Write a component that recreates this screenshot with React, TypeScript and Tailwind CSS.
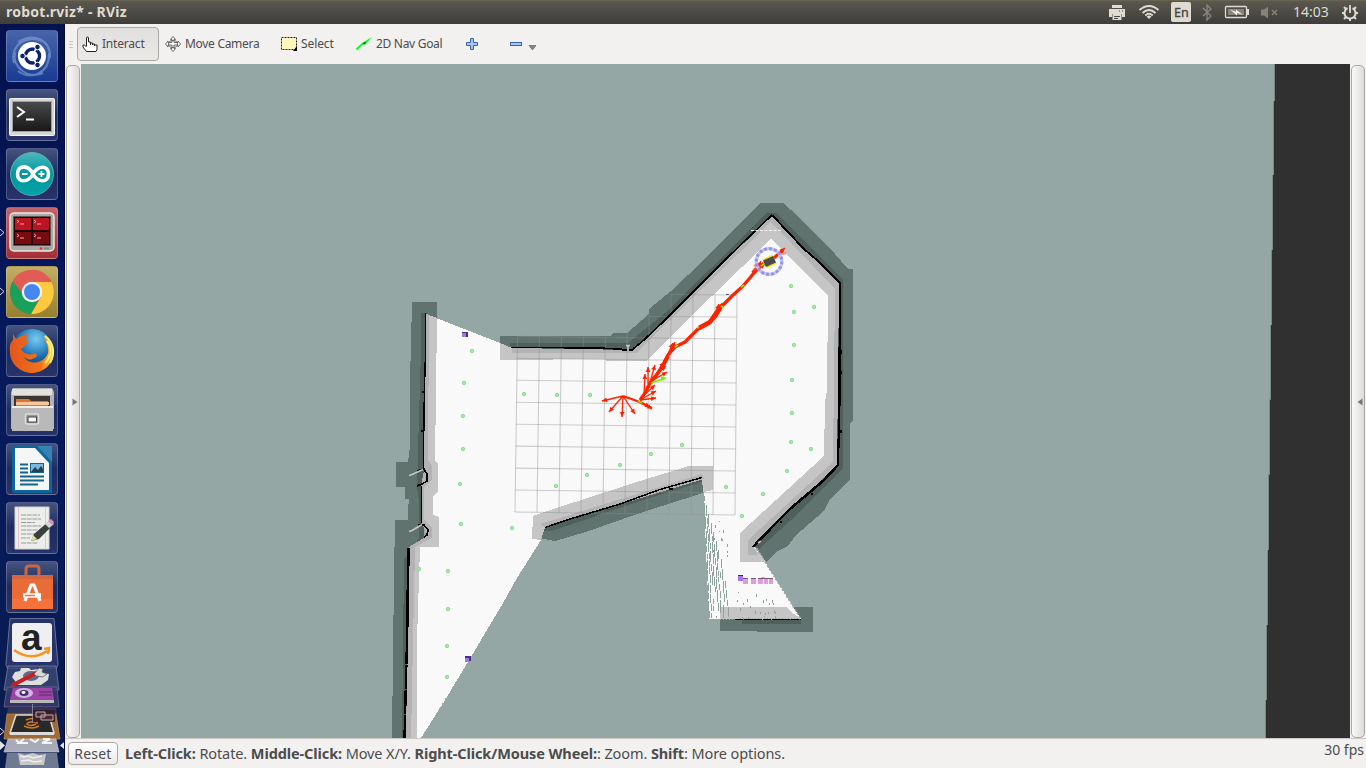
import React from "react";

const FONT = "font-['Noto_Sans','Open_Sans',sans-serif]";

type Pt = [number, number];

const DOTS: Pt[] = [
  [472, 351], [464, 383], [463, 416], [463, 449], [460, 484], [461, 524], [512, 528], [524, 394], [557, 395], [590, 395],
  [556, 486], [587, 475], [620, 465], [651, 454], [682, 445], [726, 487], [791, 286], [794, 312], [814, 307], [794, 345],
  [792, 380], [792, 413], [791, 442], [811, 449], [787, 471], [763, 494], [742, 516], [419, 569], [448, 571], [448, 609],
  [447, 646], [447, 677],
];

const ARROWS: [Pt, Pt][] = [
  [[623, 396], [602, 401]], [[623, 396], [609, 412]], [[623, 396], [622, 417]], [[623, 396], [635, 414]],
  [[648, 384], [648, 367]], [[650, 382], [655, 365]], [[650, 382], [667, 372]], [[652, 378], [666, 366]],
  [[640, 399], [655, 385]], [[640, 400], [656, 391]], [[640, 400], [656, 398]], [[644, 395], [645, 374]],
  [[655, 375], [664, 362]], [[640, 401], [652, 409]], [[640, 402], [650, 407]], [[668, 356], [675, 342]],
  [[666, 358], [673, 343]], [[716, 316], [722, 303]], [[716, 313], [719, 304]], [[769, 262], [785, 248]],
  [[757, 270], [761, 261]], [[754, 272], [765, 264]], [[646, 388], [654, 379]],
];

function arrowPath([a, b]: [Pt, Pt]) {
  const dx = b[0] - a[0];
  const dy = b[1] - a[1];
  const l = Math.hypot(dx, dy);
  const u = dx / l;
  const v = dy / l;
  const bx = b[0] - u * 5;
  const by = b[1] - v * 5;
  return `M${b[0]} ${b[1]}L${bx - v * 2.4} ${by + u * 2.4}L${bx + v * 2.4} ${by - u * 2.4}Z`;
}

/* Gaps between laser rays below the doorway */
const RAYS: [number, number, number][] = [];
{
  let s = 17;
  const rnd = () => {
    s = (s * 16807) % 2147483647;
    return s / 2147483647;
  };
  for (let i = 0; i < 9; i++) {
    for (let y = 496 + i * 9; y < 618; ) {
      const len = 5 + Math.floor(rnd() * 9);
      const x = 704.5 + i * 1.6 + ((y - 492) / 126) * (5 + i * 0.9);
      if (rnd() > i * 0.03) RAYS.push([x, y, Math.min(len, 618 - y)]);
      y += len + 1 + Math.floor(rnd() * 2);
    }
  }
  for (let i = 0; i < 12; i++) {
    RAYS.push([712 + rnd() * 16, 520 + rnd() * 50, 1 + rnd() * 2]);
  }
  for (let i = 0; i < 24; i++) {
    RAYS.push([728 + rnd() * 48, 592 + rnd() * 25, 1 + rnd() * 2]);
  }
}

function MapView() {
  return (
    <svg className="block h-full w-full" viewBox="81 64 1269 674" preserveAspectRatio="none">
      <g shapeRendering="crispEdges">
        <rect x="81" y="64" width="1269" height="674" fill="#94a7a4" />
        <path d="M1275 64H1350V738H1266Z" fill="#303030" />
        <path d="M1274 64H1275L1266 738H1265Z" fill="#7b8a87" />
        {/* inflated obstacle halo */}
        <g fill="#60736f">
          <path d="M412 302H437V318L426 345L424 540L420 548V738H392L394 575L395 520H408V510L409 499H405V487H396V462H408L410 446V380L411 342Z" />
          <path d="M500 336H610L613 333H627L649 314V309L671 291L705 259L728 235L760 203H783L798 216L812 231L835 254L848 269H853V420L850 423V479L830 499L824 511L795 536L788 546L778 551L766 562L756 546L770 520L828 300L771 239L640 360H500Z" />
          <path d="M545 527L702 477L703 493L684 499L640 513L586 532L555 541L539 538Z" />
          <path d="M720 607H813V632H757V631H720Z" />
        </g>
        <g fill="#4f605c">
          <path d="M421 313H427L424 540L412 548L408 738H402L404 560L419 538V500L417 488L418 450L421 350Z" />
          <path d="M510 343H628L665 313L710 269L767 213H776L843 280L843 468L800 512L759 549L753 546L836 465L839 283L772 216L633 350L511 348Z" />
          <path d="M545 527L702 477L702 482L640 501L552 531L543 531Z" />
          <path d="M742 619H801V624H742Z" />
        </g>
        {/* free space */}
        <path d="M426 314L500 343L512 348L633 350L772 216L839 283L837 465L754 546L765 562L801 619H709L706 550L703 478L545 527L541 540L517 578L502 605L488 628L474 652L447 697L421 738H407L409 547L427 536L421 520V487L424 470Z" fill="#f9f9f9" />
        <path d="M422 738L447 697L465 668" stroke="#94a7a4" strokeWidth="1" strokeDasharray="1 2 2 1" fill="none" />
        <g fill="#c5c5c5">
          <path d="M426 314L437 318L435 461L438 464V492L433 496V515L439 517V547H420L417 640V738H406L409 547L427 536L421 520V487L424 470Z" />
          <path d="M500 343L512 348L633 350L772 216L839 283L837 465L753 546L766 562H740V533L824 456L825 402L827 390L828 295L771 239L712 296L646 361H606V359L500 360Z" />
          <path d="M533 516L541 513L640 481L689 466H713V490L703 492L702 477L545 527L541 540L532 539Z" />
          <path d="M720 607H786L790 611L801 619H720Z" />
        </g>
        <g fill="#b3b3b3">
          <path d="M426 314L429 315L428 460L432 466V480L424 487V520L432 528V538L415 547L411 738H406L409 547L427 536L421 520V487L424 470Z" />
          <path d="M512 348L633 350L772 216L839 283L837 465L753 546L758 555H748V540L833 462L835 289L771 222L636 353H512Z" />
          <path d="M540 524L702 474L704 479L545 527Z" />
        </g>
      </g>

      <path
        d={RAYS.map(([x, y, l]) => `M${x.toFixed(1)} ${y.toFixed(1)}v${l.toFixed(1)}`).join("")}
        stroke="#8ea29e"
        strokeWidth="1"
        shapeRendering="crispEdges"
      />
      <path d="M711 619h90M740 618h60" stroke="#94a7a4" strokeDasharray="1 2" shapeRendering="crispEdges" />
      <path d="M765 562L801 619" stroke="#94a7a4" strokeWidth="1.5" strokeDasharray="2 2" />

      {/* grid */}
      <g stroke="#8f8f8f" strokeOpacity="0.42" strokeWidth="1.1">
        {Array.from({ length: 11 }, (_, i) => (
          <g key={i}>
            <path d={`M${517.5 + i * 21.95} ${i > 6 ? 294 : 337 - (i > 4 ? (i - 4) * 12 : 0)}L${515 + i * 22} ${512 + i * 0.3}`} />
            <path d={`M${i < 2 ? 671 - i * 22 : 517.3 - i * 0.22} ${(i < 2 ? 294.5 : 292.5) + i * 21.95}L${737 - i * 0.2} ${295 + i * 22}`} />
          </g>
        ))}
      </g>

      {/* walls */}
      <g fill="none" stroke="#000" strokeWidth="1.7" shapeRendering="crispEdges">
        <path d="M425.5 313V350L424 410L423.500 469" strokeWidth="1.4" />
        <path d="M417 471L424 469L427 474L427 481L422 484L417 486" />
        <path d="M421.500 486V523" strokeWidth="1.400" />
        <path d="M418 525L424 525L428 530L427 535L424 537" />
        <path d="M408.500 548L407 640" strokeWidth="2.600" />
        <path d="M407 640L404.500 738" strokeWidth="2.400" strokeDasharray="24 1" />
        <path d="M511 347.500H555L613 348.500M633 349L644 340L664 321L701 284L728 257L772 215" />
        <path d="M613 348.500L627 350L633 350" strokeWidth="2" />
        <path d="M772 215L788 232L804 249L818 261L839 282L840 283" strokeWidth="2" />
        <path d="M840 282V337L839.500 350V402L838 465" strokeWidth="2.200" />
        <path d="M838 465L824 480L810 492L790 509L774 525L753 547" strokeWidth="2.600" />
        <path d="M545 527.500L570 519L620 504L660 489.500L702 477.500" strokeWidth="1.500" />
        <path d="M735 619.500H801" strokeWidth="1.800" strokeDasharray="8 1 18 1" />
        <path d="M422 391.500h2M421 431h2M669 488.500h4" strokeWidth="2" />
        <path d="M841 350v4M841 371v3M841 430v3M812 493v2M781 521v2" strokeWidth="2" />
      </g>
      <path d="M409 475.500l3-1 11-5M409 531.500l3-1 10-6M626 345.500h4M628 345v6M758 543l3-2" stroke="#c5c5c5" strokeWidth="1.700" fill="none" />
      <path d="M751 230.500h31" stroke="#f5f5f5" strokeDasharray="3 1.500" />
      <path d="M726 294.500h3" stroke="#555" />

      {DOTS.map(([x, y]) => (
        <circle key={`${x}-${y}`} cx={x} cy={y} r="1.700" fill="#a0eda2" stroke="#8bdc94" strokeWidth="1" />
      ))}

      {/* markers */}
      <g shapeRendering="crispEdges">
        <path d="M462 332h6v5h-6zM465 656h6v5h-6z" fill="#48307c" />
        <path d="M462 333h4v4h-4zM465 658h4v4h-4zM738 576h5v5h-5z" fill="#a176e8" />
        <path d="M738 575h5v1h-5z" fill="#3d2870" />
        <path d="M743 579h5v5h-5zM751 579h5v5h-5zM758 579h5v5h-5zM764 579h4v5h-4zM769 579h4v5h-4z" fill="#df9de0" />
        <path d="M743 578h5v1h-5zM751 578h5v1h-5zM758 578h15v1h-15z" fill="#7c557d" />
        <path d="M761 577h4v1h-4z" fill="#8bdc94" />
      </g>

      {/* pose history */}
      <g fill="none" stroke="#ff2200" strokeLinejoin="round">
        <path d="M764 263L757 269L749 279L742 287L733 295L722 306L716 316L709 323L698 329L685 342L675 347L668 355L663 366L656 376L650 383L645 393L640 400" strokeWidth="3.200" />
        <path d="M721 306L710 322L699 328M762 264L753 273" strokeWidth="4.500" />
        <path d="M668 356L661 369" strokeWidth="4" />
        <path d="M774 258L783 250" strokeWidth="3.200" />
        <path d="M623 396L637 401L652 408" strokeWidth="2.200" />
        <path d={ARROWS.map(([a, b]) => `M${a[0]} ${a[1]}L${b[0]} ${b[1]}`).join("")} strokeWidth="1.300" />
      </g>
      <path d={ARROWS.map(arrowPath).join("")} fill="#ff2200" />
      <path d="M753 270l8-4M754 265l8 7M779 255l7-2" stroke="#ff5544" strokeWidth="2" strokeOpacity="0.600" />
      <path d="M651 383L663 379M638 401l4 2M675 347l3-2M721 306l3 2M741 287l3-2M697 328l2-1M761 266l4-3" stroke="#79f000" strokeWidth="1.800" />
      <path d="M667 378l-6-2v5z" fill="#6cf500" />

      {/* robot */}
      <circle cx="769" cy="261.500" r="12.800" fill="none" stroke="#c4c4f6" strokeWidth="3.200" />
      <circle cx="769" cy="261.500" r="12.800" fill="none" stroke="#9292e8" strokeWidth="3" strokeDasharray="2.800 2.200" />
      <g transform="rotate(-24 769.500 261.500)">
        <rect x="764" y="256.500" width="11" height="10" fill="#f2ea17" />
        <rect x="764" y="258" width="11" height="7" fill="#4a4b4b" />
      </g>
    </svg>
  );
}

/* ---------- launcher ---------- */

function Tile({ tone, children, running }: { tone: string; children: React.ReactNode; running?: boolean }) {
  return (
    <div className="relative h-[52px] w-[52px] shrink-0">
      {running && (
        <svg className="absolute top-[21px] -left-[6px] h-[9px] w-[5px]" viewBox="0 0 5 9">
          <path d="M0 1l4 3.500-4 3.500" fill="none" stroke="#d8d8e0" />
        </svg>
      )}
      <div className={`h-full w-full overflow-hidden rounded-[4px] border border-white/20 ${tone}`}>
        <svg className="block h-[50px] w-[50px]" viewBox="1 1 50 50">
          {children}
        </svg>
      </div>
    </div>
  );
}

const NAVY = "bg-linear-to-b from-[#46537f] via-[#1d2b5f] to-[#27336a]";

function Launcher() {
  return (
    <nav className="flex w-[65px] shrink-0 flex-col items-start gap-[7px] overflow-hidden border-r border-[#020a38] bg-linear-to-b from-[#04124d] via-[#061a5e] to-[#0a1c4d] pt-[6px] pl-[6px]">
      <Tile tone="bg-linear-to-b from-[#4864ab] to-[#183c94]">
        <g fill="none" stroke="#8ba3d6" strokeWidth="2" strokeOpacity="0.600">
          <path d="M44 28C45 10 28 2 12 12M8 33C3 15 22 3 38 12M12 41C25 51 44 43 43 23M9 22C6 38 22 49 37 43" />
        </g>
        <circle cx="26" cy="26" r="14" fill="#fff" />
        <circle cx="26.500" cy="26" r="7" fill="none" stroke="#0c246d" strokeWidth="3.400" />
        <path d="M26 26L16 26M26 26L31 17M26 26L31 35" stroke="#fff" strokeWidth="1.600" />
        <circle cx="26.500" cy="26" r="5" fill="#fff" />
        <g fill="#0c246d" stroke="#fff" strokeWidth="1">
          <circle cx="16.500" cy="26" r="2.800" />
          <circle cx="31.500" cy="17" r="2.800" />
          <circle cx="31.500" cy="35" r="2.800" />
        </g>
      </Tile>

      <Tile tone={NAVY}>
        <defs>
          <linearGradient id="term" x1="0" y1="0" x2="0" y2="1">
            <stop offset="0" stopColor="#4a4a4a" />
            <stop offset="1" stopColor="#171717" />
          </linearGradient>
        </defs>
        <rect x="3.500" y="9.500" width="45" height="37" rx="1" fill="#d6d6d6" stroke="#f7f7f7" />
        <rect x="6.500" y="12.500" width="39" height="30" fill="url(#term)" stroke="#a0a0a0" />
        <path d="M11 18l7 5-7 5M20 30.500h8" fill="none" stroke="#fff" strokeWidth="2" />
      </Tile>

      <Tile tone={NAVY}>
        <defs>
          <linearGradient id="ard" x1="0" y1="0" x2="0" y2="1">
            <stop offset="0" stopColor="#4bb9bb" />
            <stop offset="0.500" stopColor="#00979c" />
            <stop offset="1" stopColor="#00a3a8" />
          </linearGradient>
        </defs>
        <circle cx="26" cy="26" r="21.500" fill="url(#ard)" stroke="#68b9c0" strokeWidth="0.800" />
        <path d="M27 26C22 16 11.500 17 11.500 26S22 35 27 26C32 17 42.500 17 42.500 26S32 35 27 26Z" fill="none" stroke="#fff" strokeWidth="3.600" />
        <path d="M16 26h5.500M32.500 26h6M35.500 23v6" stroke="#fff" strokeWidth="1.800" />
      </Tile>

      <Tile tone="bg-linear-to-b from-[#c26469] to-[#a52e36]" running>
        <rect x="4" y="6" width="44" height="38" rx="4" fill="#aaa9a4" stroke="#e8e6e0" strokeWidth="1.500" />
        <rect x="7.500" y="9.500" width="37" height="29" fill="#220506" stroke="#585858" />
        <path d="M9 11h16v12H9zM27 11h16v12H27z" fill="#bc1522" />
        <path d="M9 25h16v12H9zM27 25h16v12H27z" fill="#760b10" />
        <g fill="none" stroke="#ff9fa0" strokeWidth="1">
          <path d="M11 13l2 1.500-2 1.500M14 17h4M28 13l2 1.500-2 1.500M31 17h4M11 27l2 1.500-2 1.500M14 31h4M28 27l2 1.500-2 1.500M31 31h4" />
        </g>
        <circle cx="35" cy="41.500" r="1.300" fill="#f22" />
        <path d="M38 41.500h5" stroke="#888" strokeWidth="2" />
      </Tile>

      <Tile tone="bg-linear-to-b from-[#c2ad65] to-[#95802e]" running>
        <circle cx="26" cy="26" r="22" fill="#e0453d" />
        <path d="M26 26L6.500 16A22 22 0 0 0 25 48L34 31Z" fill="#19a05b" />
        <path d="M26 16H45.500A22 22 0 0 1 25 48L35 31Z" fill="#fdc93e" />
        <path d="M27 16H45.500C41 7 32 3 26 4 16 4 10 9 7 15L17 29Z" fill="#e15c54" />
        <circle cx="26" cy="26" r="10.200" fill="#f5f5f5" />
        <circle cx="26" cy="26" r="8" fill="#4587f0" />
      </Tile>

      <Tile tone={NAVY}>
        <defs>
          <radialGradient id="globe" cx="0.600" cy="0.250" r="0.800">
            <stop offset="0" stopColor="#78ccf2" />
            <stop offset="0.600" stopColor="#1569ad" />
            <stop offset="1" stopColor="#08265e" />
          </radialGradient>
          <linearGradient id="fox" x1="0" y1="0" x2="1" y2="0">
            <stop offset="0" stopColor="#e2571c" />
            <stop offset="0.700" stopColor="#ef721b" />
            <stop offset="1" stopColor="#ffd43b" />
          </linearGradient>
        </defs>
        <circle cx="26" cy="24" r="20" fill="url(#globe)" />
        <path d="M7 9L10 14C14 11 18 10 22 9L20 14 22 17 19 21 15 24C18 29 23 31 30 28L31 31C26 36 21 35 17 31 23 41 38 39 42 28 43 22 40 15 37 11 43 14 47 21 48 27 47 41 36 48 25 48 13 47 4 38 4 27 3 21 5 17 7 15Z" fill="url(#fox)" />
        <path d="M39 11C47 17 50 27 44 38M41 16C46 22 46 31 39 38" fill="none" stroke="#fff176" strokeWidth="2" />
      </Tile>

      <Tile tone={NAVY}>
        <path d="M5 8l2-4h39l2 4v37H5z" fill="#b3b4b3" />
        <path d="M6 5h40v6H6z" fill="#e1e1e0" />
        <path d="M8 12h36v12H8z" fill="#3c3630" />
        <path d="M10 15h13l2 2h17v5H10z" fill="#d8763a" />
        <path d="M10 18h33v3H10z" fill="#f8c694" />
        <path d="M6 22h41v25H6z" fill="#b8b9b8" />
        <path d="M6 22h41v2H6z" fill="#ededec" />
        <rect x="19.500" y="30" width="13" height="10" rx="2" fill="#999" stroke="#dedede" strokeWidth="1.500" />
        <rect x="22" y="33" width="8.500" height="5" fill="#f8f8f8" stroke="#444" />
      </Tile>

      <Tile tone={NAVY}>
        <path d="M9 3h23l14 15v32H9q-3 0-3-3V6q0-3 3-3z" fill="#0b66a0" />
        <path d="M9 5h20l14 15v27H9z" fill="#f5f6f6" />
        <path d="M31 3h15v16z" fill="#3583b5" />
        <path d="M14 21.500h8M14 25.500h8M14 29.500h8M14 33.500h24M14 37.500h24M14 41.500h18" stroke="#14658d" strokeWidth="1.800" />
        <path d="M24 20h14v10H24z" fill="#14658d" />
        <path d="M25 21h12v8H25z" fill="#79b7dc" />
        <path d="M25 29l4-5 3 3 3-4 2 3v3z" fill="#263f4c" />
      </Tile>

      <Tile tone={NAVY}>
        <path d="M9 5h34v42H9z" fill="#eceeec" stroke="#d3d4d4" />
        <path d="M12.500 5v41M39.500 5v41" stroke="#efb0b0" strokeWidth="0.700" />
        <path d="M15 13h19M15 17h20M15 20.500h14M15 24h20M15 28h17M15 32h15M15 36h9M15 41h17" stroke="#989b9b" strokeDasharray="5 0.700" />
        <path d="M25 39l3-7 14-12 4 4-13 13z" fill="#39403d" />
        <path d="M25 39l2-6 4 4z" fill="#e9df87" />
        <path d="M39 22l5-4 4 4-5 4z" fill="#d5d5d5" />
        <path d="M42 19l3-2 3 3-2 3z" fill="#e38bbd" />
      </Tile>

      <Tile tone={NAVY}>
        <path d="M20 15V8q0-3 3-3h7q3 0 3 3v7" fill="none" stroke="#cc6542" strokeWidth="3" />
        <path d="M6 14h41v34H6z" fill="#e96b35" />
        <path d="M6 14h41v4H6z" fill="#d36641" />
        <path d="M6 38h41v10H6z" fill="#f5733b" />
        <path d="M24 24h5M25 24l-6 16M28 24l6 16" stroke="#fff" strokeWidth="3.200" />
        <path d="M17 34.500h18" stroke="#fff" strokeWidth="4.500" />
        <path d="M19 34.500h10" stroke="#ee7547" strokeWidth="1.600" />
      </Tile>

      <div className="-mt-[2px] h-[150px] w-[59px]">
        <svg className="block h-[150px] w-[65px] -translate-x-[6px]" viewBox="0 618 65 150">
          <path d="M10 618.500h44l4 46q0 4-4 4H10q-4 0-4-4z" fill="#27336a" stroke="#68719b" />
          <rect x="12" y="623" width="40" height="39" rx="3" fill="#efefef" />
          <text x="21" y="649.500" className="font-['Liberation_Sans',sans-serif] text-[37px] font-bold" fill="#222">a</text>
          <path d="M14 650Q31 662 47 651M44 649l5-1-1 6" fill="none" stroke="#f7941e" strokeWidth="2.500" />
          {/* stacked tiles */}
          <path d="M8 666h48l3 24H4z" fill="#3a4675" fillOpacity="0.850" stroke="#8189aa" strokeWidth="0.700" />
          <path d="M12 677l3-5 5-1 1-3h8l2 2 8-1 2 4 8 1-1 6-7 5H18z" fill="#dedede" />
          <ellipse cx="31" cy="676" rx="8" ry="5" fill="#606b8c" />
          <path d="M13 685L36 673" stroke="#c51f25" strokeWidth="4" strokeLinecap="round" />
          <path d="M34 674l5-6 4 1-1 3 5 2-4 3-6-1" fill="#d7d7d7" stroke="#555" strokeWidth="0.700" />
          <path d="M7 687h50l2 20H4z" fill="#3a3a68" fillOpacity="0.850" stroke="#7e78a0" strokeWidth="0.600" />
          <path d="M13 688h39l2 12H10z" fill="#9c45a6" />
          <path d="M10 700h44v3H10z" fill="#b8b8b8" />
          <ellipse cx="24" cy="693" rx="9" ry="5" fill="#cdb9dc" />
          <ellipse cx="24" cy="693" rx="4.500" ry="3" fill="#4b2779" />
          <ellipse cx="23.500" cy="692.500" rx="2" ry="1.400" fill="#fff" />
          <path d="M39 692h13M39 695h13" stroke="#632471" />
          <path d="M8 707h48l1 7H7z" fill="#343456" />
          <path d="M7 714h49l4 25H4z" fill="#9e6a35" stroke="#c18c58" strokeWidth="0.700" />
          <path d="M16 715h33l5 18H10z" fill="#292929" stroke="#d8d6d0" strokeWidth="1.600" />
          <path d="M10 732h44v3H10z" fill="#ddd" />
          <path d="M26 720q7-3 11 0v4M37 722q-9-1-10 2 3 3 9 0M24 726q8 4 15 0" fill="none" stroke="#db7a22" strokeWidth="1.500" />
          <path d="M33 710h22v12H33z" fill="#391925" fillOpacity="0.900" />
          <path d="M36 712h9v5h-9zM41 715h12v5H41z" fill="#4b2633" stroke="#b7aeb1" />
          <path d="M32.500 704v19" stroke="#a5a1ae" strokeWidth="0.700" />
          <path d="M8 739h48l3 13H4z" fill="#a7aab8" stroke="#d1d1d9" strokeWidth="0.600" />
          <path d="M16 740l3 3M24 739l-5 4 9 0M30 739l5 3 4-3M43 739h7l-8 4h10" stroke="#f4f4f4" strokeWidth="2" fill="none" />
          <path d="M7 753h50l2 15H5z" fill="#6f7992" />
          <path d="M18 753l7 2 8-2 6 2 7-1-2 11H20z" fill="#c5c7c9" />
          <path d="M20 756l4 1 4-1 5 2 9-2M21 761l8-1 5 2 8-1" stroke="#eee" strokeWidth="1.500" fill="none" />
          <path d="M0 728l4 3.500-4 3.500" fill="none" stroke="#ddd" />
          <path d="M0 741l5 4.500-5 4.500zM65 741l-5 4.500 5 4.500z" fill="#e3e3e8" />
        </svg>
      </div>
    </nav>
  );
}

/* ---------- top panel ---------- */

function TopPanel() {
  return (
    <header className="flex h-[24px] shrink-0 items-center justify-between border-t border-[#67644f] bg-linear-to-b from-[#5b5850] to-[#3e3d39] pl-[6px] text-[#dfdbd2]">
      <span className="pb-[2px] text-[14px] leading-[21px] font-bold tracking-[0.25px] whitespace-nowrap">robot.rviz* - RViz</span>
      <div className="flex h-full w-[262px] items-center">
        <svg className="h-[23px] w-[186px]" viewBox="1104 1 186 23">
          <g fill="#dfdbd2">
            <path d="M1112 5h10v3h-10zM1109 9h16v8h-3v-3h-10v3h-3z" />
            <path d="M1112.500 14h9v6h-9z" />
            <path d="M1114 16h6v1h-6zM1114 18h4v1h-4zM1119 10.500h1v1h-1zM1122 10.500h1v1h-1z" fill="#4c4a44" />
            <rect x="1171" y="2" width="20" height="20" rx="2" />
          </g>
          <g fill="none" stroke="#dfdbd2" strokeWidth="1.900">
            <path d="M1139.500 10Q1149 2 1158.500 10M1142.500 13Q1149 7 1155.500 13M1145.300 15.500Q1149 12 1152.700 15.500" />
          </g>
          <path d="M1149 19l-2.500-2.500q2.500-2 5 0z" fill="#dfdbd2" />
          <text x="1174" y="17" className="font-['Noto_Sans',sans-serif] text-[12.500px]" fill="#45443f" stroke="#45443f" strokeWidth="0.300">En</text>
          <path d="M1203 8l8 8-4 4V5l4 4-8 7" fill="none" stroke="#8a877f" strokeWidth="1.300" />
          <rect x="1225.500" y="6.500" width="21" height="11" rx="1" fill="none" stroke="#dfdbd2" strokeWidth="1.300" />
          <path d="M1228 9h16v6h-16z" fill="#88857d" />
          <path d="M1247 9h2v6h-2z" fill="#dfdbd2" />
          <path d="M1230 9.500l6 2.300v-2.300l7 5.500-6-2v2.500z" fill="#f0eee7" />
          <path d="M1261 9.500h3l4-3v12l-4-3h-3z" fill="#85827a" />
          <path d="M1272 10l5 5M1277 10l-5 5" stroke="#85827a" strokeWidth="1.500" />
        </svg>
        <span className="w-[51px] pb-px pl-[3px] text-[14px] leading-[20px] tracking-[0px]">14:03</span>
        <svg className="h-[18px] w-[18px]" viewBox="0 0 18 18" fill="none" stroke="#dfdbd2">
          <path d="M6.500 4.200A5.500 5.500 0 1 0 11.500 4.200" strokeWidth="2" />
          <path d="M9 1v8" strokeWidth="1.800" />
          <path d="M3 3l2.500 2.500M15 3l-2.500 2.500M1 9h3M14 9h3M3 15l2.500-2.500M15 15l-2.500-2.500M9 14v3" strokeWidth="2" />
        </svg>
      </div>
    </header>
  );
}

function Toolbar() {
  return (
    <div className="flex h-[40px] shrink-0 items-center bg-[#f2f1f0] text-[12px] text-[#4c4c4c]">
      <div className="flex w-[12px] flex-col gap-[2px] pl-[4px]">
        <i className="h-px w-[4px] bg-[#c8c6c3]" />
        <i className="h-px w-[4px] bg-[#c8c6c3]" />
        <i className="h-px w-[4px] bg-[#c8c6c3]" />
      </div>
      <button className="flex h-[34px] w-[82px] items-center rounded-[4px] border border-[#aaa7a3] bg-linear-to-b from-[#e2e0de] to-[#ebe9e7] pl-[3px]">
        <svg className="mr-[3px] h-[18px] w-[18px]" viewBox="0 0 18 18">
          <path d="M5.500 11V3q0-1 1-1t1 1V7h2v1h2v1h2v1h2.500v4.500l-1 2H5.500L2 12V10h1.500l2 2" fill="#fff" stroke="#222" />
          <path d="M9.500 7v3M11.500 8v2M13.500 9v2" stroke="#222" />
        </svg>
        <span className="tracking-[-0.2px]">Interact</span>
      </button>
      <div className="flex w-[115px] items-center pl-[6px]">
        <svg className="mr-[4px] h-[16px] w-[16px] shrink-0" viewBox="0 0 16 16" fill="#fff" stroke="#5b5b5b" strokeWidth="0.900">
          <path d="M8 .5l2.500 3H9v3h4V5l2.500 3L13 11V9H9v3.500h1.500L8 15.500l-2.500-3H7V9H3v2L.5 8 3 5v1.500h4v-3H5.500z" />
          <ellipse cx="8" cy="8" rx="4.500" ry="3.500" fill="none" />
        </svg>
        <span className="whitespace-nowrap tracking-[-0.3px]">Move Camera</span>
      </div>
      <div className="flex w-[82px] items-center pl-[7px]">
        <svg className="mr-[4px] h-[14px] w-[16px]" viewBox="0 0 16 14">
          <rect x="0.500" y="0.500" width="15" height="12" fill="#fdf5ba" stroke="#222" strokeDasharray="2 1" />
          <path d="M16 9v5h-4z" />
        </svg>
        <span className="tracking-[-0.1px]">Select</span>
      </div>
      <div className="flex w-[102px] items-center">
        <svg className="mr-[4px] h-[14px] w-[16px]" viewBox="0 0 16 14">
          <path d="M0 11.500l6-5.500 10-6-6 7-3.500 1L1 13.500z" fill="#16f52c" />
          <path d="M6.500 6.500l3.500-2-1 3z" fill="#155f24" />
        </svg>
        <span className="whitespace-nowrap tracking-[-0.3px]">2D Nav Goal</span>
      </div>
      <svg className="ml-[6px] h-[14px] w-[72px]" viewBox="0 0 72 14">
        <path d="M6.500 1.500h3v4h4v3h-4v4h-3v-4h-4v-3h4z" fill="#a9c6ea" stroke="#3465a4" />
        <rect x="46.500" y="5.500" width="11" height="3" fill="#a9c6ea" stroke="#3465a4" />
        <path d="M65 8.500h7l-3.500 4.500z" fill="#858585" stroke="#666" strokeWidth="0.700" />
      </svg>
    </div>
  );
}

function Handle({ side }: { side: "left" | "right" }) {
  return (
    <div className="flex w-[16px] shrink-0 bg-[#f2f1f0] px-px pt-px">
      <div className="flex h-full w-[14px] items-center justify-center rounded-[5px] border border-[#aaa8a5] bg-linear-to-r from-[#fafafa] to-[#dcdbd8] pl-[4px]">
        <svg className="h-[8px] w-[6px] shrink-0" viewBox="0 0 6 8">
          <path d={side === "left" ? "M0.500 0.500l5 3.500-5 3.500z" : "M5.500 0.500L0.500 4l5 3.500z"} fill="#777" />
        </svg>
      </div>
    </div>
  );
}

export default function App() {
  return (
    <div className={`flex h-[768px] w-[1366px] flex-col overflow-hidden bg-[#f2f1f0] ${FONT}`}>
      <TopPanel />
      <div className="flex min-h-0 flex-1">
        <Launcher />
        <main className="flex min-w-0 flex-1 flex-col">
          <Toolbar />
          <div className="flex h-[674px] shrink-0">
            <Handle side="left" />
            <div className="min-w-0 flex-1">
              <MapView />
            </div>
            <Handle side="right" />
          </div>
          <footer className="flex h-[30px] items-start border-t border-[#cbc9c6] pl-[3px] text-[14px] text-[#4c4c4c]">
            <button className="mt-[3px] h-[23px] w-[50px] rounded-[4px] border border-[#aaa7a3] bg-linear-to-b from-white to-[#eceae8] leading-[20px] tracking-[0.2px]">
              Reset
            </button>
            <p className="mt-[3px] ml-[7px] flex-1 text-[14.5px] leading-[22px] tracking-[-0.1px] whitespace-nowrap">
              <b>Left-Click:</b> Rotate. <b>Middle-Click:</b> Move X/Y. <b>Right-Click/Mouse Wheel:</b>: Zoom. <b>Shift</b>: More options.
            </p>
            <span className="pr-[2px] leading-[22px] tracking-[0px]">30 fps</span>
          </footer>
        </main>
      </div>
    </div>
  );
}
